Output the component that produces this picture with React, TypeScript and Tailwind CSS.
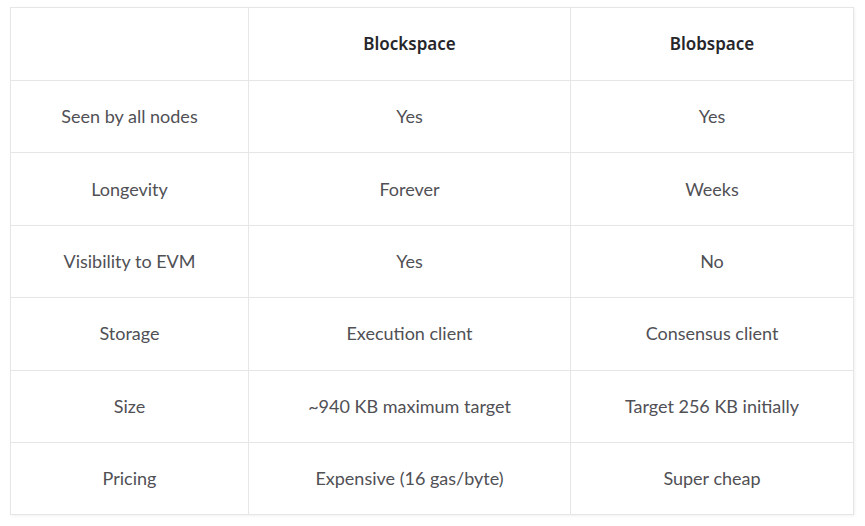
const rows = [
  ["Seen by all nodes", "Yes", "Yes"],
  ["Longevity", "Forever", "Weeks"],
  ["Visibility to EVM", "Yes", "No"],
  ["Storage", "Execution client", "Consensus client"],
  ["Size", "~940 KB maximum target", "Target 256 KB initially"],
  ["Pricing", "Expensive (16 gas/byte)", "Super cheap"],
];

export default function App() {
  return (
    <div className="w-[865px] h-[526px] bg-white pl-[10px] pt-[7px]">
      <table className="w-[843px] table-fixed border-collapse border border-[#e6e6e6] shadow-[1px_1px_3px_rgba(0,0,0,0.06)] font-['Lato',sans-serif] text-[18px] text-[#505055]">
        <colgroup>
          <col className="w-[238px]" />
          <col className="w-[322px]" />
          <col className="w-[283px]" />
        </colgroup>
        <thead>
          <tr className="h-[73px]">
            <th className="border border-[#e6e6e6]"></th>
            <th className="border border-[#e6e6e6] font-['Noto_Sans',sans-serif] font-semibold text-[17px] text-[#26262b]">Blockspace</th>
            <th className="border border-[#e6e6e6] font-['Noto_Sans',sans-serif] font-semibold text-[17px] text-[#26262b]">Blobspace</th>
          </tr>
        </thead>
        <tbody>
          {rows.map((row, i) => (
            <tr key={i} className="h-[72.4px]">
              {row.map((cell, j) => (
                <td key={j} className="border border-[#e6e6e6] text-center">{cell}</td>
              ))}
            </tr>
          ))}
        </tbody>
      </table>
    </div>
  );
}
